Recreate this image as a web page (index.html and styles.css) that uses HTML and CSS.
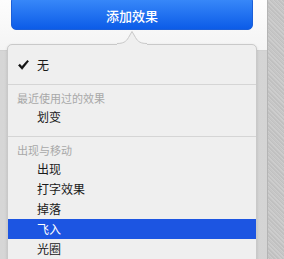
FILE: index.html
```html
<!DOCTYPE html>
<html lang="zh">
<head>
<meta charset="utf-8">
<link rel="stylesheet" href="styles.css">
</head>
<body>
<div class="screen">
  <div class="pane">
    <div class="toolbar">
      <div class="add-btn">添加效果</div>
    </div>
    <div class="list-area"></div>
  </div>
  <div class="side-strip"></div>

  <svg class="pointer" width="30" height="15" viewBox="0 0 30 15">
    <path d="M0 15 L0 13.5 C6 13.5 9 12 11.5 7.5 L15 1.5 L18.5 7.5 C21 12 24 13.5 30 13.5 L30 15 Z" fill="#efefef"/>
    <path d="M0 13.5 C6 13.5 9 12 11.5 7.5 L15 1.5 L18.5 7.5 C21 12 24 13.5 30 13.5" fill="none" stroke="#c9c9c9" stroke-width="1"/>
  </svg>

  <div class="menu">
    <div class="item">
      <span class="mark">
        <svg width="11" height="10" viewBox="0 0 11 10"><path d="M0.4 5.4 L1.8 4.1 L3.9 6.4 L9.4 0.3 L10.6 1.3 L4.1 9.4 Z" fill="#111" stroke="#111" stroke-width="0.5" stroke-linejoin="round"/></svg>
      </span>
      <span class="label">无</span>
    </div>
    <div class="sep"></div>
    <div class="header">最近使用过的效果</div>
    <div class="item"><span class="mark"></span><span class="label">划变</span></div>
    <div class="sep"></div>
    <div class="header">出现与移动</div>
    <div class="item"><span class="mark"></span><span class="label">出现</span></div>
    <div class="item"><span class="mark"></span><span class="label">打字效果</span></div>
    <div class="item"><span class="mark"></span><span class="label">掉落</span></div>
    <div class="item selected"><span class="mark"></span><span class="label">飞入</span></div>
    <div class="item"><span class="mark"></span><span class="label">光圈</span></div>
  </div>
</div>
</body>
</html>
```

FILE: styles.css
```css
html, body {
  margin: 0;
  padding: 0;
}
body {
  width: 284px;
  height: 259px;
  overflow: hidden;
  font-family: "Noto Sans CJK SC", "Noto Sans", sans-serif;
}
.screen {
  position: relative;
  display: flex;
  width: 284px;
  height: 259px;
  overflow: hidden;
}
.pane {
  width: 267px;
  display: flex;
  flex-direction: column;
}
.toolbar {
  height: 50px;
  background: linear-gradient(#fdfdfd, #f4f4f4);
  padding-left: 11px;
}
.add-btn {
  width: 242px;
  height: 34px;
  margin-top: -4px;
  padding-top: 4px;
  box-sizing: border-box;
  border: 1px solid #1b5fd8;
  border-radius: 5px;
  background: linear-gradient(#3c8cfa, #0c5ce8);
  color: #fff;
  font-size: 13px;
  font-weight: 500;
  display: flex;
  align-items: center;
  justify-content: center;
}
.list-area {
  flex: 1;
  background: linear-gradient(90deg, #d6d6d6, #dcdcdc 50%, #d4d4d4);
  border-top: 1px solid #d0d0d0;
}
.side-strip {
  flex: 1;
  border-left: 1px solid #b4b4b4;
  background-color: #c6c6c6;
  background-image: repeating-linear-gradient(45deg, rgba(255,255,255,0.12) 0 1px, rgba(0,0,0,0.03) 1px 2px, transparent 2px 3px);
}
.menu {
  position: absolute;
  left: 7px;
  top: 44px;
  width: 248px;
  height: 240px;
  border: 1px solid #c9c9c9;
  border-radius: 5px;
  background: #efefef;
  box-shadow: 0 1px 3px rgba(0,0,0,0.12);
  padding-top: 10px;
  font-size: 12px;
  color: #1a1a1a;
}
.pointer {
  position: absolute;
  left: 117px;
  top: 30px;
  z-index: 2;
}
.item {
  display: flex;
  align-items: center;
  height: 20px;
}
.mark {
  width: 29px;
  padding-left: 10px;
  box-sizing: border-box;
  display: flex;
  align-items: center;
}
.label {
  line-height: 20px;
}
.selected {
  background: #1c55e2;
  color: #fff;
}
.sep {
  height: 1px;
  background: #d5d5d5;
  margin: 9px 0 4px;
}
.header {
  height: 18px;
  line-height: 18px;
  padding-left: 9px;
  font-size: 11px;
  color: #a8a8a8;
}
```
